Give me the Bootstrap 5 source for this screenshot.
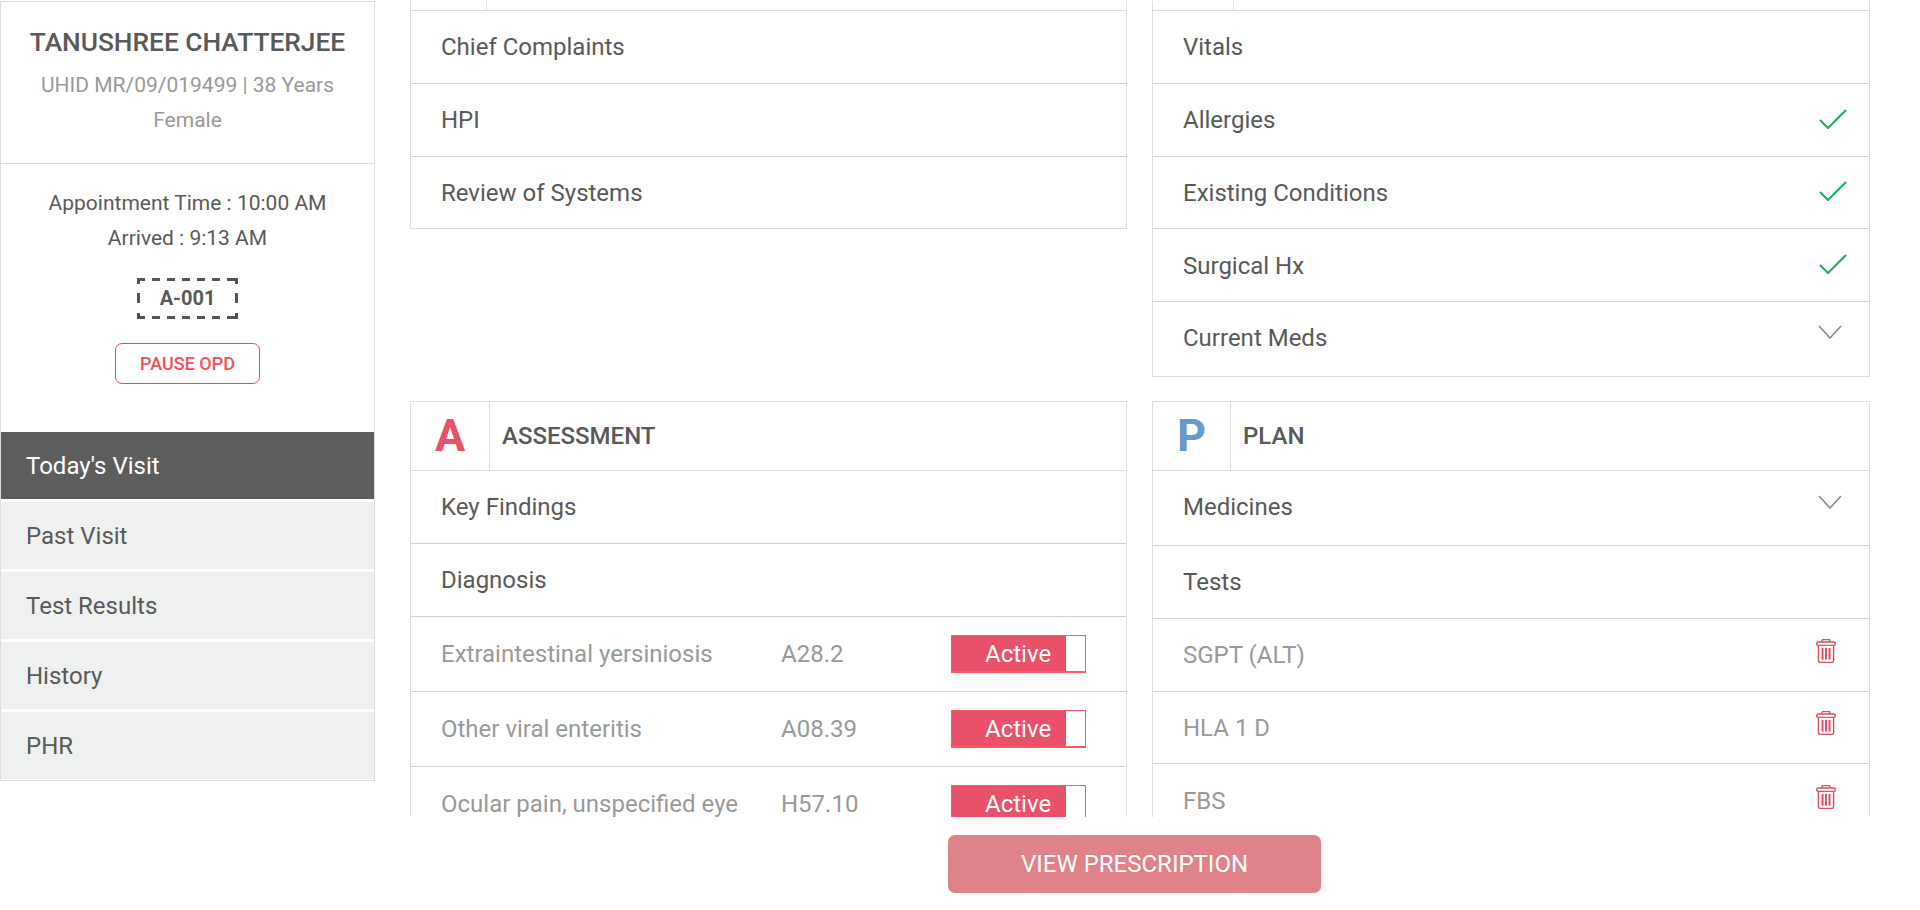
<!DOCTYPE html>
<html lang="en">

<head>
    <meta charset="UTF-8">
    <meta name="viewport" content="width=device-width, initial-scale=1.0">
    <title>Today's Visit</title>
    <link href="https://cdn.jsdelivr.net/npm/bootstrap@5.3.0/dist/css/bootstrap.min.css" rel="stylesheet">
    <style>
        html, body {
            height: 910px;
            overflow: hidden;
        }

        body {
            font-family: Roboto, "Liberation Sans", sans-serif;
            color: #595959;
            background: #fff;
        }

        .page-wrap {
            padding-top: 1px;
        }

        /* patient sidebar */
        .side-panel {
            width: 375px;
            height: 780px;
            flex: none;
            border: 1px solid #ddd;
        }

        .patient-head {
            height: 162px;
            padding-top: 20px;
            border-bottom: 1px solid #ddd;
        }

        .patient-name {
            font-size: 26.3px;
            font-weight: 500;
            line-height: 40px;
            margin: 0 0 6px;
        }

        .patient-meta {
            font-size: 21px;
            line-height: 35px;
            color: #999;
        }

        .visit-info {
            height: 268px;
            padding-top: 22px;
            font-size: 21px;
            line-height: 35px;
        }

        .token-box {
            width: 101px;
            height: 41px;
            margin: 22px auto 24px;
            font-size: 20px;
            font-weight: 700;
            line-height: 41px;
            background:
                repeating-linear-gradient(90deg, #555 0 8px, transparent 8px 15px) left top / 100% 3px no-repeat,
                repeating-linear-gradient(90deg, #555 0 8px, transparent 8px 15px) left bottom / 100% 3px no-repeat,
                repeating-linear-gradient(180deg, #555 0 6px, transparent 6px 15px, #555 15px 25px, transparent 25px 35px, #555 35px 41px) left top / 3px 100% no-repeat,
                repeating-linear-gradient(180deg, #555 0 6px, transparent 6px 15px, #555 15px 25px, transparent 25px 35px, #555 35px 41px) right top / 3px 100% no-repeat;
        }

        .pause-btn {
            width: 145px;
            height: 41px;
            padding: 0;
            border: 1px solid #d9505f;
            border-radius: 7px;
            color: #f4505a;
            background: #fff;
            font-size: 18px;
            font-weight: 500;
        }

        .side-nav .list-group-item {
            height: 67px;
            margin-bottom: 3px;
            padding: 0 0 0 25px;
            border: 0;
            border-radius: 0;
            background: #eff1f0;
            color: #595959;
            font-size: 24px;
            line-height: 69px;
        }

        .side-nav .list-group-item.active {
            background: #5d5d5d;
            color: #fff;
        }

        .side-nav .list-group-item:last-child {
            margin-bottom: 0;
        }

        /* main notes area */
        .main-area {
            min-width: 0;
            padding: 0 50px 0 35px;
        }

        .notes-scroll {
            height: 816px;
            overflow: hidden;
        }

        .notes-grid {
            display: grid;
            grid-template-columns: 717px 718px;
            column-gap: 25px;
            row-gap: 24px;
            align-items: start;
        }

        .note-box {
            border: 1px solid #ddd;
            border-top: 0;
        }

        .note-box.full-top {
            border-top: 1px solid #ddd;
        }

        .stub-head {
            height: 10px;
            border-bottom: 1px solid #ddd;
        }

        .stub-head span {
            display: block;
            width: 76px;
            height: 100%;
            border-right: 1px solid #ddd;
        }

        .stub-head .stub-right {
            width: 81px;
        }

        .note-head {
            height: 69px;
            border-bottom: 1px solid #ddd;
        }

        .note-letter {
            width: 79px;
            height: 100%;
            border-right: 1px solid #ddd;
            font-size: 45px;
            font-weight: 700;
            line-height: 67px;
            text-align: center;
        }

        .letter-a {
            color: #e9506a;
        }

        .letter-p {
            width: 78px;
            color: #6699cc;
        }

        .note-title {
            padding: 0 0 0 12px;
            font-size: 24px;
            font-weight: 500;
        }

        .note-list .list-group-item {
            height: 72.75px;
            padding: 1px 30px 0;
            border: 0;
            border-bottom: 1px solid #d2d2d2;
            border-radius: 0;
            color: #595959;
            font-size: 24px;
        }

        .note-list .list-group-item:last-child {
            border-bottom: 0;
        }

        .note-list .short-row {
            height: 71.75px;
        }

        .note-list .expand-row {
            height: 74px;
            padding: 0 30px 3px;
        }

        .note-list .expand-row.tall-row {
            height: 75px;
        }

        .note-list .dx-row {
            height: 75px;
            padding-top: 0;
            color: #999;
        }

        .note-list .test-row {
            color: #999;
        }

        .dx-name {
            width: 340px;
            flex: none;
        }

        .dx-code {
            width: 170px;
            flex: none;
        }

        .status-pill {
            width: 135px;
            height: 38px;
            flex: none;
            border: 1px solid #ff5a5f;
            border-bottom-width: 2px;
            background: #fff;
        }

        .status-text {
            width: 114px;
            height: 100%;
            padding-left: 33px;
            background: #e9506a;
            color: #fff;
            font-size: 24px;
            line-height: 36px;
        }

        .row-check {
            margin-right: -8px;
            margin-top: -3px;
        }

        .row-chevron {
            align-self: flex-start;
            margin: 23px -3px 0 0;
        }

        .tall-row .row-chevron {
            margin-top: 24px;
        }

        .row-trash {
            margin-right: 3px;
            margin-top: -9px;
        }

        /* bottom action */
        .foot-bar {
            padding: 18px 11px 0 0;
        }

        .rx-btn {
            width: 373px;
            height: 58px;
            padding-top: 6px;
            border: 0;
            border-radius: 7px;
            background: #e0828a;
            color: #fff;
            font-size: 24px;
        }
    </style>
</head>

<body>
    <div class="page-wrap d-flex">
        <aside class="side-panel d-flex flex-column">
            <div class="patient-head text-center">
                <h1 class="patient-name">TANUSHREE CHATTERJEE</h1>
                <div class="patient-meta">UHID MR/09/019499 | 38 Years<br>Female</div>
            </div>
            <div class="visit-info text-center">
                <div>Appointment Time : 10:00 AM</div>
                <div>Arrived : 9:13 AM</div>
                <div class="token-box">A-001</div>
                <button type="button" class="btn pause-btn">PAUSE OPD</button>
            </div>
            <div class="side-nav list-group">
                <a href="#" class="list-group-item active">Today's Visit</a>
                <a href="#" class="list-group-item">Past Visit</a>
                <a href="#" class="list-group-item">Test Results</a>
                <a href="#" class="list-group-item">History</a>
                <a href="#" class="list-group-item">PHR</a>
            </div>
        </aside>

        <main class="main-area flex-grow-1">
            <div class="notes-scroll">
                <div class="notes-grid">
                    <section class="note-box">
                        <div class="stub-head"><span></span></div>
                        <div class="note-list list-group">
                            <div class="list-group-item d-flex align-items-center">Chief Complaints</div>
                            <div class="list-group-item d-flex align-items-center">HPI</div>
                            <div class="list-group-item short-row d-flex align-items-center">Review of Systems</div>
                        </div>
                    </section>

                    <section class="note-box">
                        <div class="stub-head"><span class="stub-right"></span></div>
                        <div class="note-list list-group">
                            <div class="list-group-item d-flex align-items-center">Vitals</div>
                            <div class="list-group-item d-flex align-items-center justify-content-between">Allergies
                                <svg class="row-check" width="28" height="20" viewBox="0 0 28 20" fill="none" stroke="#1aae5c" stroke-width="2"><path d="M1 11l8 8L27 1" /></svg>
                            </div>
                            <div class="list-group-item d-flex align-items-center justify-content-between">Existing Conditions
                                <svg class="row-check" width="28" height="20" viewBox="0 0 28 20" fill="none" stroke="#1aae5c" stroke-width="2"><path d="M1 11l8 8L27 1" /></svg>
                            </div>
                            <div class="list-group-item d-flex align-items-center justify-content-between">Surgical Hx
                                <svg class="row-check" width="28" height="20" viewBox="0 0 28 20" fill="none" stroke="#1aae5c" stroke-width="2"><path d="M1 11l8 8L27 1" /></svg>
                            </div>
                            <div class="list-group-item expand-row d-flex align-items-center justify-content-between">Current Meds
                                <svg class="row-chevron" width="24" height="14" viewBox="0 0 24 14" fill="none" stroke="#888" stroke-width="1.5"><path d="M1 1l11 12L23 1" /></svg>
                            </div>
                        </div>
                    </section>

                    <section class="note-box full-top">
                        <div class="note-head d-flex align-items-center">
                            <div class="note-letter letter-a">A</div>
                            <div class="note-title">ASSESSMENT</div>
                        </div>
                        <div class="note-list list-group">
                            <div class="list-group-item d-flex align-items-center">Key Findings</div>
                            <div class="list-group-item d-flex align-items-center">Diagnosis</div>
                            <div class="list-group-item dx-row d-flex align-items-center">
                                <span class="dx-name">Extraintestinal yersiniosis</span>
                                <span class="dx-code">A28.2</span>
                                <span class="status-pill"><span class="status-text d-block">Active</span></span>
                            </div>
                            <div class="list-group-item dx-row d-flex align-items-center">
                                <span class="dx-name">Other viral enteritis</span>
                                <span class="dx-code">A08.39</span>
                                <span class="status-pill"><span class="status-text d-block">Active</span></span>
                            </div>
                            <div class="list-group-item dx-row d-flex align-items-center">
                                <span class="dx-name">Ocular pain, unspecified eye</span>
                                <span class="dx-code">H57.10</span>
                                <span class="status-pill"><span class="status-text d-block">Active</span></span>
                            </div>
                        </div>
                    </section>

                    <section class="note-box full-top">
                        <div class="note-head d-flex align-items-center">
                            <div class="note-letter letter-p">P</div>
                            <div class="note-title">PLAN</div>
                        </div>
                        <div class="note-list list-group">
                            <div class="list-group-item expand-row tall-row d-flex align-items-center justify-content-between">Medicines
                                <svg class="row-chevron" width="24" height="14" viewBox="0 0 24 14" fill="none" stroke="#888" stroke-width="1.5"><path d="M1 1l11 12L23 1" /></svg>
                            </div>
                            <div class="list-group-item d-flex align-items-center">Tests</div>
                            <div class="list-group-item test-row d-flex align-items-center justify-content-between">SGPT (ALT)
                                <svg class="row-trash" width="20" height="24" viewBox="0 0 20 24" fill="none" stroke="#e0505f" stroke-width="1.4"><path d="M6 3V1.6C6 1 6.4.6 7 .6h6c.6 0 1 .4 1 1V3" /><rect x=".7" y="3" width="18.6" height="3.4" rx="1.4" /><path d="M2.4 6.4v15c0 1.100.9 2 2 2h11.200c1.100 0 2-.9 2-2v-15" /><path d="M6.500 9v11.500M10 9v11.500M13.500 9v11.500" stroke-width="2" /></svg>
                            </div>
                            <div class="list-group-item test-row d-flex align-items-center justify-content-between">HLA 1 D
                                <svg class="row-trash" width="20" height="24" viewBox="0 0 20 24" fill="none" stroke="#e0505f" stroke-width="1.4"><path d="M6 3V1.6C6 1 6.4.6 7 .6h6c.6 0 1 .4 1 1V3" /><rect x=".7" y="3" width="18.6" height="3.4" rx="1.4" /><path d="M2.4 6.4v15c0 1.100.9 2 2 2h11.200c1.100 0 2-.9 2-2v-15" /><path d="M6.500 9v11.500M10 9v11.500M13.500 9v11.500" stroke-width="2" /></svg>
                            </div>
                            <div class="list-group-item test-row d-flex align-items-center justify-content-between">FBS
                                <svg class="row-trash" width="20" height="24" viewBox="0 0 20 24" fill="none" stroke="#e0505f" stroke-width="1.4"><path d="M6 3V1.6C6 1 6.4.6 7 .6h6c.6 0 1 .4 1 1V3" /><rect x=".7" y="3" width="18.6" height="3.4" rx="1.4" /><path d="M2.4 6.4v15c0 1.100.9 2 2 2h11.200c1.100 0 2-.9 2-2v-15" /><path d="M6.500 9v11.500M10 9v11.500M13.500 9v11.500" stroke-width="2" /></svg>
                            </div>
                        </div>
                    </section>
                </div>
            </div>
            <div class="foot-bar d-flex justify-content-center">
                <button type="button" class="btn rx-btn">VIEW PRESCRIPTION</button>
            </div>
        </main>
    </div>

    <script src="https://cdn.jsdelivr.net/npm/bootstrap@5.3.0/dist/js/bootstrap.bundle.min.js"></script>
</body>

</html>
